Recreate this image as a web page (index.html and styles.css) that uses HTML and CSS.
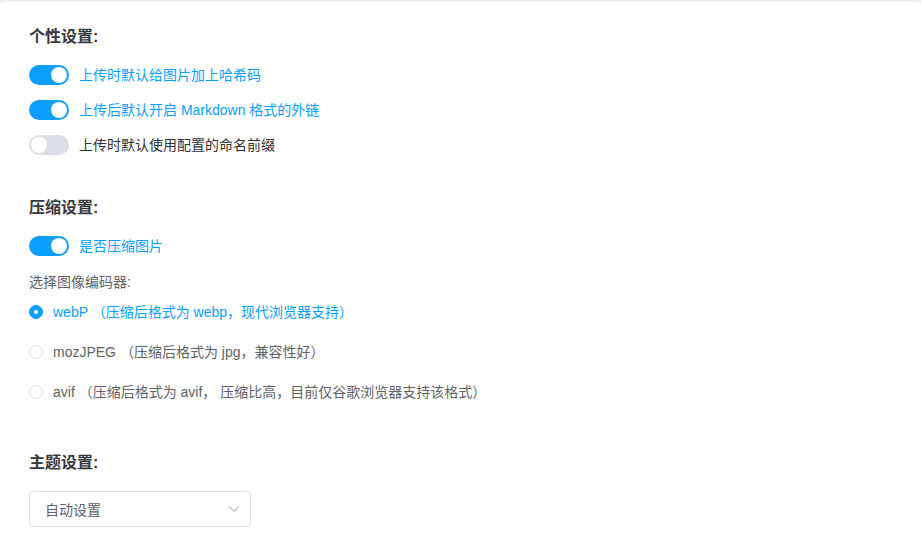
FILE: index.html
```html
<!DOCTYPE html>
<html lang="zh">
<head>
<meta charset="utf-8">
<link rel="stylesheet" href="styles.css">
</head>
<body>
<div class="card">
  <section class="section">
    <h3 class="title">个性设置:</h3>
    <div class="row"><span class="switch on"><span class="knob"></span></span><span class="label active">上传时默认给图片加上哈希码</span></div>
    <div class="row"><span class="switch on"><span class="knob"></span></span><span class="label active">上传后默认开启 Markdown 格式的外链</span></div>
    <div class="row"><span class="switch"><span class="knob"></span></span><span class="label">上传时默认使用配置的命名前缀</span></div>
  </section>
  <section class="section s2">
    <h3 class="title">压缩设置:</h3>
    <div class="row"><span class="switch on"><span class="knob"></span></span><span class="label active">是否压缩图片</span></div>
    <div class="sub">选择图像编码器:</div>
    <div class="radio-row"><span class="radio checked"></span><span class="rlabel active">webP （压缩后格式为 webp，现代浏览器支持）</span></div>
    <div class="radio-row"><span class="radio"></span><span class="rlabel">mozJPEG （压缩后格式为 jpg，兼容性好）</span></div>
    <div class="radio-row"><span class="radio"></span><span class="rlabel">avif （压缩后格式为 avif， 压缩比高，目前仅谷歌浏览器支持该格式）</span></div>
  </section>
  <section class="section s3">
    <h3 class="title">主题设置:</h3>
    <div class="select">
      <span class="select-text">自动设置</span>
      <svg class="chev" width="12" height="8" viewBox="0 0 12 8"><path d="M1 1.5 L6 6.5 L11 1.5" fill="none" stroke="#c0c4cc" stroke-width="1.2"/></svg>
    </div>
  </section>
</div>
</body>
</html>
```
FILE: styles.css
```css
html, body {
  margin: 0;
  padding: 0;
}
body {
  background: #f0f0f0;
  font-family: "Liberation Sans", "Noto Sans CJK SC", sans-serif;
  font-size: 14px;
  color: #303133;
  height: 533px;
  overflow: hidden;
}
.card {
  background: #fff;
  margin-top: 2px;
  border-radius: 4px 4px 0 0;
  height: 531px;
  padding: 23px 0 0 29px;
  box-sizing: border-box;
}
.title {
  margin: 0 0 8px;
  font-size: 16px;
  line-height: 24px;
  font-weight: bold;
  color: #36383d;
}
.row {
  display: flex;
  align-items: center;
  height: 35px;
}
.switch {
  position: relative;
  width: 40px;
  height: 20px;
  border-radius: 10px;
  background: #dcdfe6;
  flex: none;
}
.switch.on {
  background: #0a9eff;
}
.knob {
  position: absolute;
  top: 2px;
  left: 2px;
  width: 16px;
  height: 16px;
  border-radius: 50%;
  background: #fff;
}
.switch.on .knob {
  left: 22px;
}
.label {
  margin-left: 10px;
  line-height: 20px;
  color: #303133;
}
.active {
  color: #0a9eff;
}
.s2 {
  margin-top: 34px;
}
.sub {
  margin-top: 9px;
  line-height: 20px;
  color: #606266;
}
.radio-row {
  display: flex;
  align-items: center;
  height: 40px;
}
.radio {
  width: 12px;
  height: 12px;
  border: 1px solid #dcdfe6;
  border-radius: 50%;
  background: #fff;
  box-sizing: content-box;
  flex: none;
  position: relative;
}
.radio.checked {
  background: #0a9eff;
  border-color: #0a9eff;
}
.radio.checked::after {
  content: "";
  position: absolute;
  left: 4px;
  top: 4px;
  width: 4px;
  height: 4px;
  border-radius: 50%;
  background: #fff;
}
.rlabel {
  margin-left: 10px;
  color: #606266;
  line-height: 20px;
}
.rlabel.active {
  color: #0a9eff;
}
.s3 {
  margin-top: 39px;
}
.s3 .title {
  margin-bottom: 16px;
}
.select {
  width: 222px;
  height: 36px;
  box-sizing: border-box;
  border: 1px solid #dcdfe6;
  border-radius: 4px;
  display: flex;
  align-items: center;
  justify-content: space-between;
  padding: 0 10px 0 15px;
}
.select-text {
  color: #606266;
}
.chev {
  display: block;
}
```
